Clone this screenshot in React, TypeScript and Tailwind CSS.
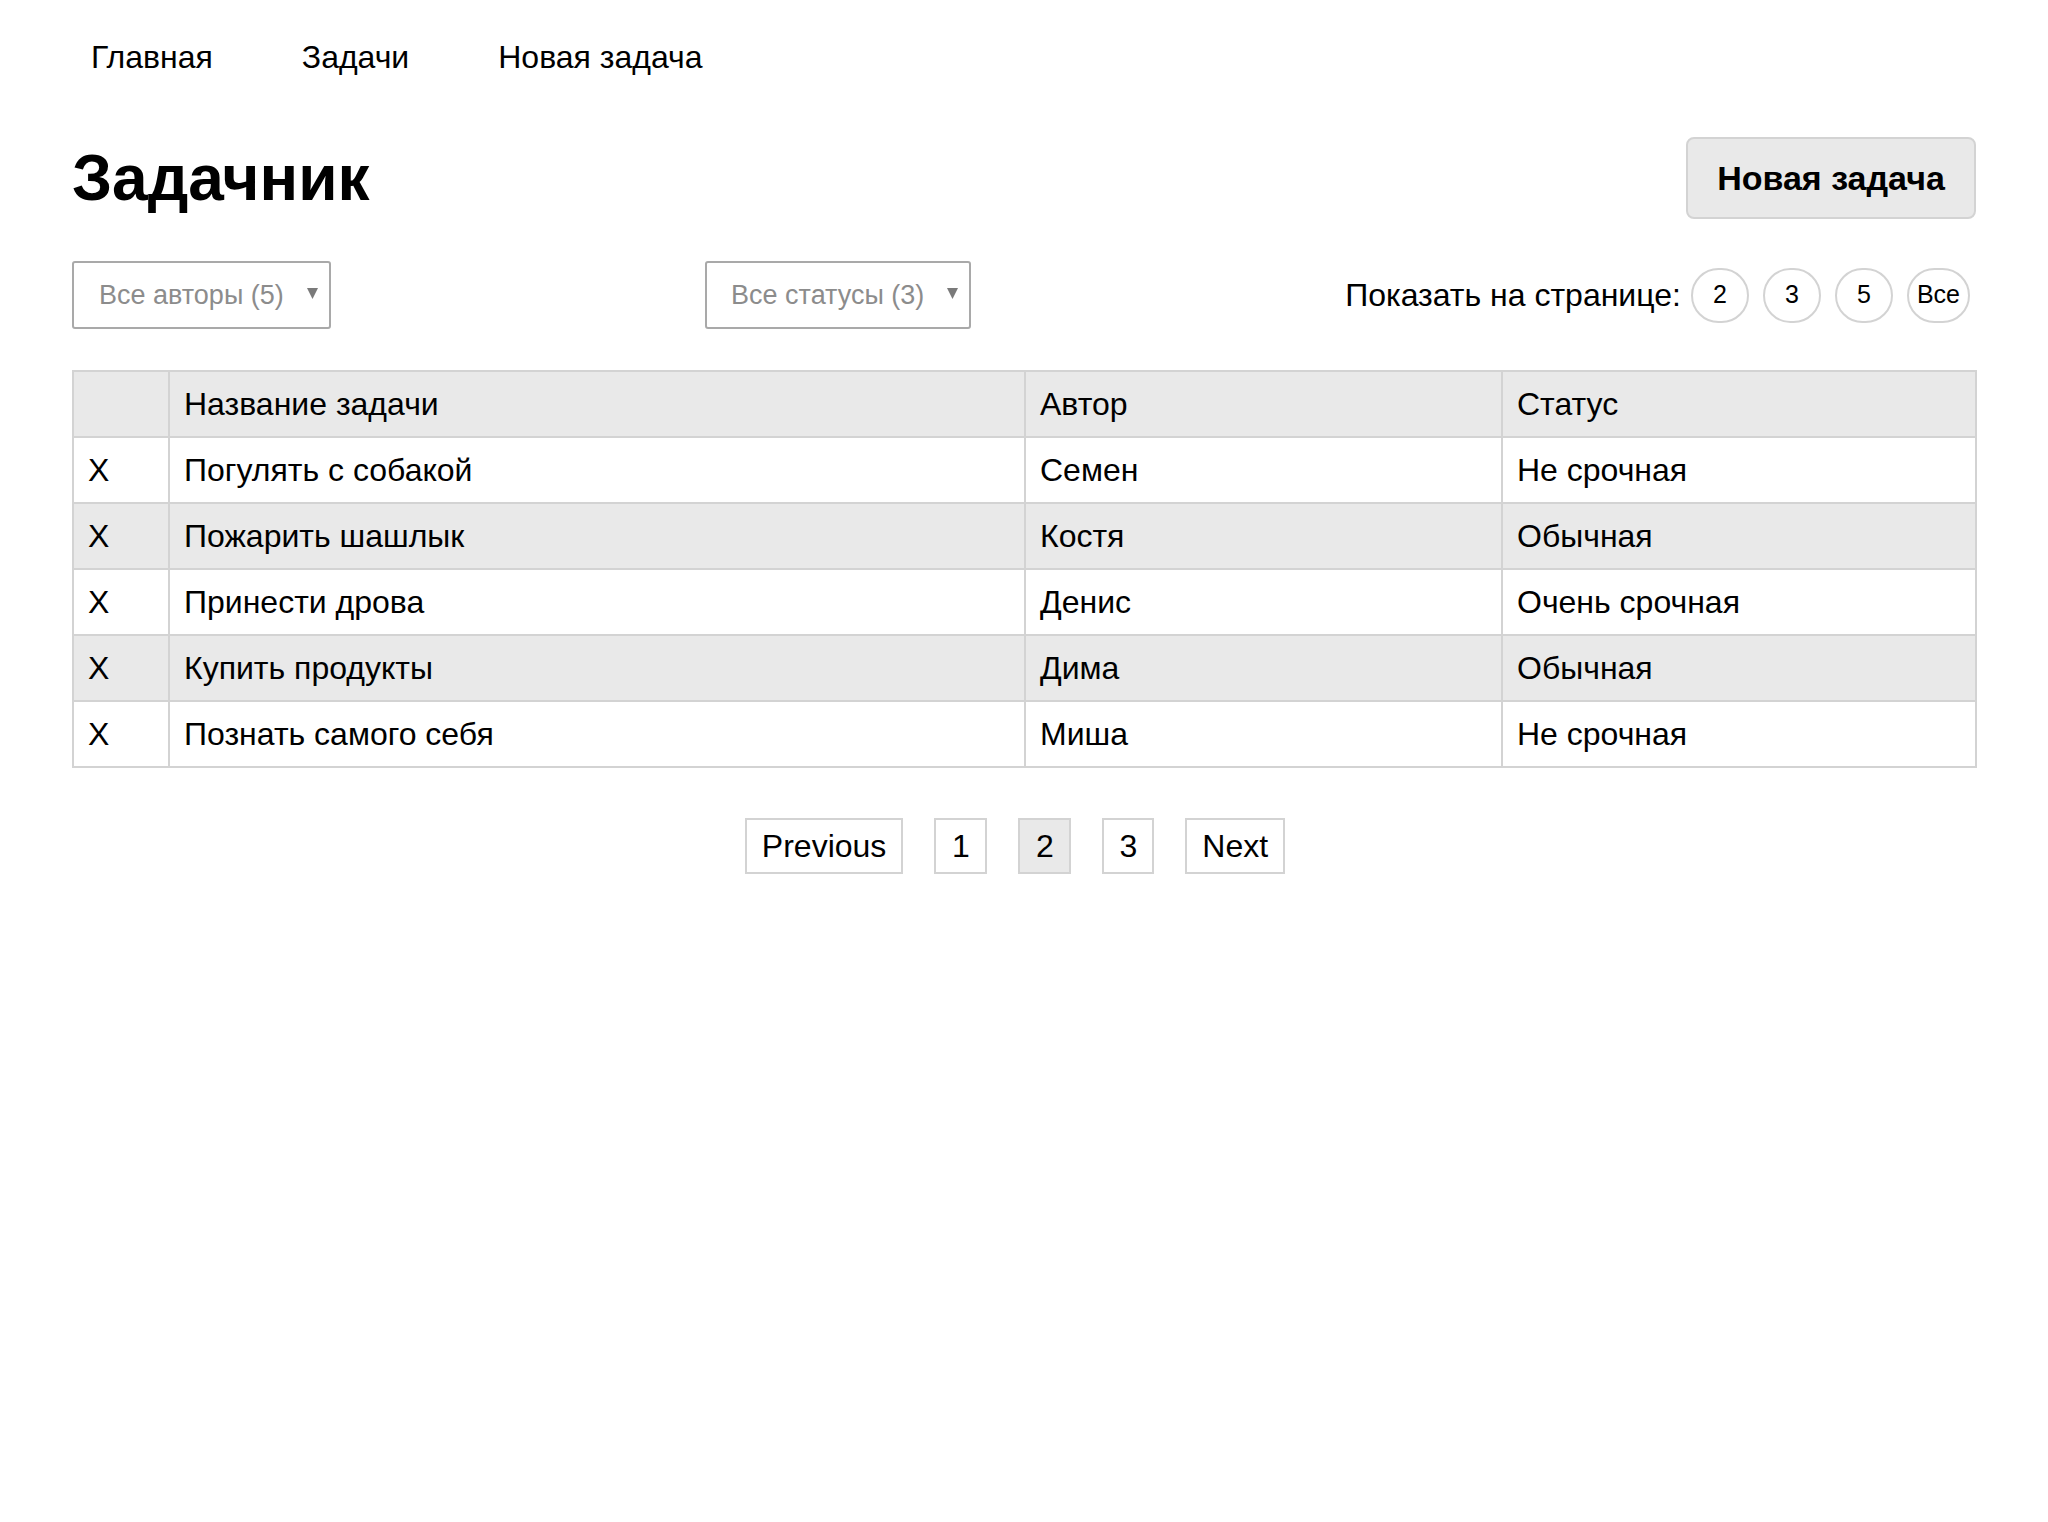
import React from "react";

const rows = [
  { name: "Погулять с собакой", author: "Семен", status: "Не срочная" },
  { name: "Пожарить шашлык", author: "Костя", status: "Обычная" },
  { name: "Принести дрова", author: "Денис", status: "Очень срочная" },
  { name: "Купить продукты", author: "Дима", status: "Обычная" },
  { name: "Познать самого себя", author: "Миша", status: "Не срочная" },
];

function Caret() {
  return (
    <svg width="11" height="12" viewBox="0 0 11 12" className="shrink-0 -mt-[2px]">
      <polygon points="0,0 11,0 5.5,11" fill="#7a7a7a" />
    </svg>
  );
}

export default function App() {
  return (
    <div
      className="min-h-[1522px] bg-white text-black px-[72px]"
      style={{ fontFamily: '"Liberation Sans", Arial, sans-serif' }}
    >
      <nav className="flex gap-[89px] pl-[19px] pt-[39px] text-[32px] leading-[37px]">
        <a>Главная</a>
        <a>Задачи</a>
        <a>Новая задача</a>
      </nav>

      <div className="mt-[61px] flex items-center justify-between">
        <h1 className="text-[64px] font-bold leading-[74px]">Задачник</h1>
        <button className="h-[82px] w-[290px] rounded-[8px] border-2 border-[#d3d3d3] bg-[#e9e9e9] text-[34px] font-bold leading-[40px]">
          Новая задача
        </button>
      </div>

      <div className="mt-[42px] flex items-center justify-between">
        <div className="w-[259px] h-[68px] border-2 border-[#a9a9a9] rounded-[3px] flex items-center justify-between pl-[25px] pr-[11px] text-[27px] text-[#8c8c8c]">
          <span>Все авторы (5)</span>
          <Caret />
        </div>
        <div className="w-[266px] h-[68px] border-2 border-[#a9a9a9] rounded-[3px] flex items-center justify-between pl-[24px] pr-[11px] text-[27px] text-[#8c8c8c]">
          <span>Все статусы (3)</span>
          <Caret />
        </div>
        <div className="flex items-center pr-[6px]">
          <span className="text-[32px] mr-[10px]">Показать на странице:</span>
          <div className="flex gap-[14px]">
            {["2", "3", "5", "Все"].map((n) => (
              <button
                key={n}
                className="min-w-[58px] h-[55px] px-[8px] rounded-full border-2 border-[#d3d3d3] bg-white text-[25px] flex items-center justify-center"
              >
                {n}
              </button>
            ))}
          </div>
        </div>
      </div>

      <table className="mt-[41px] w-[1903px] border-collapse border-2 border-[#d3d3d3] text-[32px] table-fixed">
        <colgroup>
          <col className="w-[96px]" />
          <col className="w-[856px]" />
          <col className="w-[477px]" />
          <col className="w-[474px]" />
        </colgroup>
        <thead>
          <tr className="h-[66px] bg-[#e9e9e9]">
            <th className="border-2 border-[#d3d3d3] pl-[14px] text-left font-normal"></th>
            <th className="border-2 border-[#d3d3d3] pl-[14px] text-left font-normal">Название задачи</th>
            <th className="border-2 border-[#d3d3d3] pl-[14px] text-left font-normal">Автор</th>
            <th className="border-2 border-[#d3d3d3] pl-[14px] text-left font-normal">Статус</th>
          </tr>
        </thead>
        <tbody>
          {rows.map((r, i) => (
            <tr key={r.name} className={i % 2 === 1 ? "h-[66px] bg-[#e9e9e9]" : "h-[66px] bg-white"}>
              <td className="border-2 border-[#d3d3d3] pl-[14px]">X</td>
              <td className="border-2 border-[#d3d3d3] pl-[14px]">{r.name}</td>
              <td className="border-2 border-[#d3d3d3] pl-[14px]">{r.author}</td>
              <td className="border-2 border-[#d3d3d3] pl-[14px]">{r.status}</td>
            </tr>
          ))}
        </tbody>
      </table>

      <div className="mt-[50px] flex justify-center gap-[31px] pr-[18px] text-[32px]">
        <button className="h-[56px] px-[15px] border-2 border-[#d3d3d3] bg-white">Previous</button>
        <button className="h-[56px] w-[53px] border-2 border-[#d3d3d3] bg-white">1</button>
        <button className="h-[56px] w-[53px] border-2 border-[#d3d3d3] bg-[#e9e9e9]">2</button>
        <button className="h-[56px] w-[52px] border-2 border-[#d3d3d3] bg-white">3</button>
        <button className="h-[56px] px-[15px] border-2 border-[#d3d3d3] bg-white">Next</button>
      </div>
    </div>
  );
}
